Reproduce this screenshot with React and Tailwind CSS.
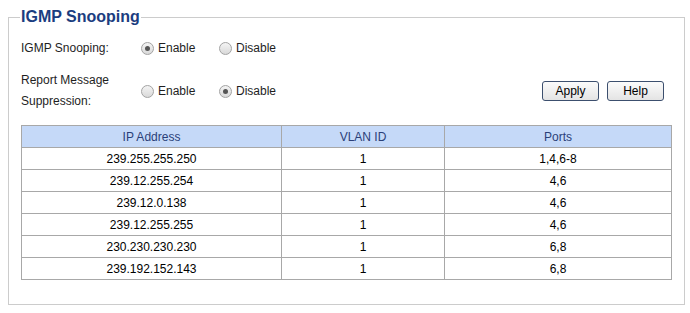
import React from "react";

function Radio({ checked }) {
  return (
    <span className="relative inline-block w-[13px] h-[13px] rounded-full border border-[#a3a3a3] bg-gradient-to-b from-[#f4f4f4] to-[#d9d9d9] shrink-0">
      {checked && (
        <span className="absolute left-[3px] top-[3px] w-[5px] h-[5px] rounded-full bg-[#555555]" />
      )}
    </span>
  );
}

function Option({ checked, label }) {
  return (
    <div className="w-[78px] flex items-center gap-[4px]">
      <Radio checked={checked} />
      <span>{label}</span>
    </div>
  );
}

function Btn({ children }) {
  return (
    <button className="w-[57px] h-[20px] rounded-[3px] border border-[#3c4f6e] bg-gradient-to-b from-[#fbfbfb] to-[#e4e4e4] text-[12px] text-black leading-[18px]">
      {children}
    </button>
  );
}

const rows = [
  ["239.255.255.250", "1", "1,4,6-8"],
  ["239.12.255.254", "1", "4,6"],
  ["239.12.0.138", "1", "4,6"],
  ["239.12.255.255", "1", "4,6"],
  ["230.230.230.230", "1", "6,8"],
  ["239.192.152.143", "1", "6,8"],
];

export default function App() {
  return (
    <div className="w-[690px] h-[313px] bg-white overflow-hidden font-['Liberation_Sans',Arial,sans-serif] text-[12px] text-[#1e1e1e] pt-[7px]">
      <fieldset className="ml-[8px] w-[676px] border border-[#cccccc] px-[12px] pb-[24px]">
        <legend className="-ml-[1px] px-[1px] text-[16px] leading-[20px] font-bold text-[#1b3d80]">
          IGMP Snooping
        </legend>
        <div className="mt-[11px] h-[20px] flex items-center">
          <div className="w-[120px]">IGMP Snooping:</div>
          <Option checked label="Enable" />
          <Option label="Disable" />
        </div>
        <div className="mt-[12px] flex items-center">
          <div className="w-[120px] leading-[21px]">
            Report Message
            <br />
            Suppression:
          </div>
          <Option label="Enable" />
          <Option checked label="Disable" />
          <div className="ml-auto mr-[8px] flex gap-[8px]">
            <Btn>Apply</Btn>
            <Btn>Help</Btn>
          </div>
        </div>
        <table className="mt-[13px] w-[650px] border-collapse table-fixed">
          <colgroup>
            <col className="w-[260px]" />
            <col className="w-[163px]" />
            <col className="w-[227px]" />
          </colgroup>
          <thead>
            <tr className="bg-[#c5d9f8] text-[#2a3f78]">
              <th className="h-[22px] p-0 border border-[#a8a8a8] font-normal text-center">IP Address</th>
              <th className="h-[22px] p-0 border border-[#a8a8a8] font-normal text-center">VLAN ID</th>
              <th className="h-[22px] p-0 border border-[#a8a8a8] font-normal text-center">Ports</th>
            </tr>
          </thead>
          <tbody>
            {rows.map((r, i) => (
              <tr key={i} className="text-black">
                <td className="h-[22px] p-0 border border-[#a8a8a8] text-center">{r[0]}</td>
                <td className="h-[22px] p-0 border border-[#a8a8a8] text-center">{r[1]}</td>
                <td className="h-[22px] p-0 border border-[#a8a8a8] text-center">{r[2]}</td>
              </tr>
            ))}
          </tbody>
        </table>
      </fieldset>
    </div>
  );
}
